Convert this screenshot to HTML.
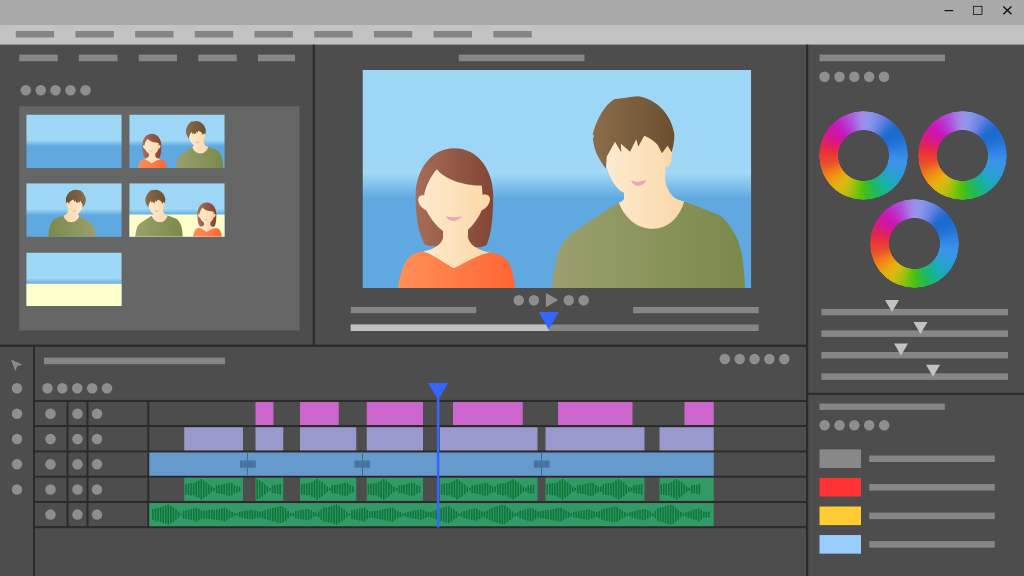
<!DOCTYPE html>
<html><head><meta charset="utf-8"><title>Video editor</title>
<style>
html,body{margin:0;padding:0;background:#4d4d4d;font-family:"Liberation Sans",sans-serif;}
#app{position:relative;width:1024px;height:576px;overflow:hidden;background:#4d4d4d;}
.wheel{position:absolute;width:89px;height:89px;border-radius:50%;background:conic-gradient(from 0deg,#9d8ee8 0deg,#9295ea 5deg,#8a94ea 10deg,#8290e8 15deg,#7a89e6 20deg,#6f84e4 25deg,#5f7fe0 30deg,#4a78db 35deg,#3672d6 40deg,#266dd1 45deg,#1c6ad0 50deg,#1a6bd0 55deg,#1c6dd2 60deg,#2070d5 65deg,#2474d8 70deg,#2879db 75deg,#2d7ee0 80deg,#3384e4 85deg,#388ae7 90deg,#3a8fe8 95deg,#3a92e7 100deg,#3795e5 105deg,#3497e1 110deg,#3099dc 115deg,#2c9cd6 120deg,#27a0ce 125deg,#22a5c4 130deg,#1caab9 135deg,#19afac 140deg,#18b29d 145deg,#18b48b 150deg,#1bb677 155deg,#1fb764 160deg,#27b950 165deg,#31bc3a 170deg,#3dbe25 175deg,#4bc015 180deg,#5ec10c 185deg,#75c10b 190deg,#8dc10e 195deg,#a4c010 200deg,#b8bf10 205deg,#cbbd10 210deg,#dab910 215deg,#e3b210 220deg,#eaaa10 225deg,#eda010 230deg,#f09411 235deg,#f08715 240deg,#ee771b 245deg,#ec6722 250deg,#e95828 255deg,#e84b2e 260deg,#e84131 265deg,#e93935 270deg,#e8313c 275deg,#e62a49 280deg,#e2245b 285deg,#de1e6f 290deg,#da1982 295deg,#d61691 300deg,#d2149f 305deg,#cd14ab 310deg,#c917b6 315deg,#c41ebf 320deg,#be29c7 325deg,#b936ce 330deg,#b344d5 335deg,#ae52da 340deg,#aa63df 345deg,#a775e3 350deg,#a384e6 355deg,#9d8ee8 360deg);
-webkit-mask:radial-gradient(circle closest-side,transparent 0,transparent 25.1px,#000 25.7px,#000 44.2px,transparent 44.6px);
mask:radial-gradient(circle closest-side,transparent 0,transparent 25.1px,#000 25.7px,#000 44.2px,transparent 44.6px);}
</style></head><body><div id="app"><svg width="1024" height="576" viewBox="0 0 1024 576" style="position:absolute;left:0;top:0"><defs>
<linearGradient id="sky" x1="0" y1="0" x2="0" y2="1" gradientUnits="objectBoundingBox">
 <stop offset="0" stop-color="#9ed7f6"/>
 <stop offset="0.445" stop-color="#9ed7f6"/>
 <stop offset="0.47" stop-color="#a2d9f6"/>
 <stop offset="0.59" stop-color="#5fa9e0"/>
 <stop offset="1" stop-color="#5fa9e0"/>
</linearGradient>
<linearGradient id="wskin" x1="418" y1="0" x2="490" y2="0" gradientUnits="userSpaceOnUse">
 <stop offset="0" stop-color="#fdead0"/><stop offset="1" stop-color="#fbd8a6"/>
</linearGradient>
<linearGradient id="whair" x1="415" y1="0" x2="493" y2="0" gradientUnits="userSpaceOnUse">
 <stop offset="0" stop-color="#a56e58"/><stop offset="1" stop-color="#834534"/>
</linearGradient>
<linearGradient id="wshirt" x1="398" y1="0" x2="515" y2="0" gradientUnits="userSpaceOnUse">
 <stop offset="0" stop-color="#ff9058"/><stop offset="1" stop-color="#ff6633"/>
</linearGradient>
<linearGradient id="mskin" x1="605" y1="0" x2="685" y2="0" gradientUnits="userSpaceOnUse">
 <stop offset="0" stop-color="#fdead0"/><stop offset="1" stop-color="#fbd8a6"/>
</linearGradient>
<linearGradient id="mhair" x1="592" y1="0" x2="675" y2="0" gradientUnits="userSpaceOnUse">
 <stop offset="0" stop-color="#8c6c4a"/><stop offset="1" stop-color="#6a5030"/>
</linearGradient>
<linearGradient id="mshirt" x1="552" y1="0" x2="745" y2="0" gradientUnits="userSpaceOnUse">
 <stop offset="0" stop-color="#9ba06e"/><stop offset="1" stop-color="#7a894a"/>
</linearGradient>

<g id="woman">
 <!-- hair back -->
 <path fill="url(#whair)" d="M454.2,148.2 C478,148.2 493.2,170 493.2,196 C493.2,218 491,236 486.5,245 C481,248.5 472,247.5 467.5,245 L442.5,244 C437,247 429,247 424.5,244 C418,232 415.6,216 415.6,196 C415.6,170 431,148.2 454.2,148.2 Z"/>
 <!-- shirt -->
 <path fill="url(#wshirt)" d="M422.5,251.2 C413,253 406,258 403.5,266 C400.5,274 398.5,282 398,288 L515,288 C514.5,280 512.5,270 509,263 C505.5,256.5 498,253.5 490,252.5 L454,256 Z"/>
 <!-- neck / chest skin -->
 <path fill="url(#wskin)" d="M443,225 L443,238 C441,246 431,250 423,251.5 C433,254 446,264.5 453.8,268.2 C462,264.5 477,255 489.5,252.6 C478,250 468.5,245 467.8,236 L467.8,225 Z"/>
 <!-- ears -->
 <path fill="#fde8cc" d="M425,195.6 C421.5,194.2 418,196.2 418.2,200 C418.5,204.6 422,208.8 427,210.4 Z"/>
 <path fill="#fbd9a8" d="M482,195 C485.5,193.6 490.3,195.2 490,199.4 C489.6,204.2 486,208.6 481,210.4 Z"/>
 <!-- face -->
 <path fill="url(#wskin)" d="M436.7,169.2 C431,176 425.5,186 424,196 C423.7,203 425,208 427,211.8 C431,219.5 437,226.5 443,231 L443,235 L468,235 L468,229.8 C474,224.5 479,217 481.6,210.5 C482.8,206 483,200 482.6,196 L481.8,185.6 C468,185.5 448,182 436.7,169.2 Z"/>
 <!-- mouth -->
 <path fill="#eba3b8" d="M445.5,216.3 C450,217.6 457,217.6 461.8,216.3 C459.5,219.6 456.5,220.9 453.6,220.9 C450.6,220.9 447.6,219.6 445.5,216.3 Z"/>
</g>

<g id="man">
 <!-- shirt -->
 <path fill="url(#mshirt)" d="M618.8,202.2 L575,231 C566,237 561,244 558.5,252 C555,264 552.5,278 552,288 L745,288 C744.5,276 743.5,264 742,256 C740,245 737,237 733,231 C729,224 724,218 719,215 L684.2,201.2 Z"/>
 <!-- neck -->
 <path fill="url(#mskin)" d="M624,180 L624,199 C623,201 621,202 618.8,202.4 C624,217 637,228.8 652.7,228.8 C668,228.8 680,217 684.2,201.3 C679,200.5 675.5,198.5 673.4,197 C669,192 666,187 665.3,181 L665,160 Z"/>
 <!-- ear -->
 <path fill="#fbdaac" d="M660,138 L670,144 L672,154 L664,154 Z"/>
 <path fill="#fbd8a6" d="M664,150 C667,146 671.5,148 671.8,153 C672,158 670.5,164 668.3,166.8 C666.5,167 665,166 664.2,165 Z"/>
 <!-- face -->
 <path fill="url(#mskin)" d="M606,131 L606.5,166 C608,174 613,184 619,189.5 C622,192 624.5,193.5 628,194 L660,194 C663,188 665,180 665.2,172 L666,131 Z"/>
 <!-- hair -->
 <path fill="url(#mhair)" d="M638.3,96.3 C630,97 621,98.3 614.2,99.2 C604,105 596,121 592.6,134.6 L594,135.6 L592.9,139 C593.6,146 595.8,152 597.8,156 C600,160.5 603,165 605.8,168.4
  L606.7,156.7 L615,141.7 L621.3,152.5 L620.8,143.8 L630,151.7 L636.3,139.2 L638.3,146.7 L644.2,135.8 C650,138 654,141 657.5,144.7 L662,153.3 L667.5,145.8 L671.7,152.2
  C673.5,146 674.6,140 674.3,134 C672,118 660,100 638.3,96.3 Z"/>
 <!-- mouth -->
 <path fill="#eba3b8" d="M630.8,180.4 C636,182.4 642,182 646.6,179.6 C645,183.6 641.6,185.7 638.2,185.7 C635,185.7 632.3,183.6 630.8,180.4 Z"/>
</g>

<clipPath id="pv"><rect x="362.5" y="70" width="388.75" height="218"/></clipPath>
</defs><rect x="0.00" y="0.00" width="1024.00" height="576.00" fill="#4d4d4d" /><rect x="0.00" y="0.00" width="1024.00" height="25.00" fill="#a9a9a9" /><rect x="0.00" y="25.00" width="1024.00" height="19.60" fill="#c3c3c3" /><path d="M944.5,10.6 H953.2" stroke="#111" stroke-width="1.2" fill="none"/><rect x="973.4" y="6.3" width="8.6" height="8.2" stroke="#111" stroke-width="0.8" fill="none"/><path d="M1003.3,6.4 L1011.5,14.3 M1011.5,6.4 L1003.3,14.3" stroke="#111" stroke-width="1.35" fill="none"/><rect x="15.75" y="31.00" width="38.40" height="6.50" fill="#858585" /><rect x="75.44" y="31.00" width="38.40" height="6.50" fill="#858585" /><rect x="135.13" y="31.00" width="38.40" height="6.50" fill="#858585" /><rect x="194.82" y="31.00" width="38.40" height="6.50" fill="#858585" /><rect x="254.51" y="31.00" width="38.40" height="6.50" fill="#858585" /><rect x="314.20" y="31.00" width="38.40" height="6.50" fill="#858585" /><rect x="373.89" y="31.00" width="38.40" height="6.50" fill="#858585" /><rect x="433.58" y="31.00" width="38.40" height="6.50" fill="#858585" /><rect x="493.27" y="31.00" width="38.40" height="6.50" fill="#858585" /><rect x="19.25" y="54.60" width="38.50" height="6.60" fill="#868686" /><rect x="78.75" y="54.60" width="38.75" height="6.60" fill="#868686" /><rect x="138.75" y="54.60" width="38.25" height="6.60" fill="#868686" /><rect x="198.25" y="54.60" width="38.50" height="6.60" fill="#868686" /><rect x="258.00" y="54.60" width="37.00" height="6.60" fill="#868686" /><circle cx="25.75" cy="90.25" r="5.25" fill="#8e8e8e"/><circle cx="40.75" cy="90.25" r="5.25" fill="#8e8e8e"/><circle cx="55.50" cy="90.25" r="5.25" fill="#8e8e8e"/><circle cx="70.50" cy="90.25" r="5.25" fill="#8e8e8e"/><circle cx="85.50" cy="90.25" r="5.25" fill="#8e8e8e"/><rect x="19.25" y="106.25" width="280.25" height="224.25" fill="#666666" /><rect x="312.70" y="44.60" width="2.20" height="300.90" fill="#2b2b2b" /><rect x="806.00" y="44.60" width="2.20" height="531.40" fill="#2b2b2b" /><rect x="0.00" y="344.60" width="806.00" height="2.30" fill="#2b2b2b" /><rect x="808.00" y="392.80" width="216.00" height="2.10" fill="#2b2b2b" /><rect x="33.00" y="346.00" width="2.00" height="230.00" fill="#2b2b2b" /><rect x="458.75" y="54.60" width="125.75" height="6.60" fill="#868686" /><g clip-path="url(#pv)"><rect x="362.50" y="70.00" width="388.75" height="218.00" fill="url(#sky)" /><use href="#woman"/><use href="#man"/></g><clipPath id="tc1"><rect x="26.25" y="114.5" width="95.5" height="53.5"/></clipPath><g clip-path="url(#tc1)"><g transform="translate(26.25 114.5) scale(0.24566) translate(-362.5 -70)"><rect x="362.50" y="70.00" width="388.75" height="219.00" fill="url(#sky)" /></g></g><clipPath id="tc2"><rect x="129.25" y="114.5" width="95.5" height="53.5"/></clipPath><g clip-path="url(#tc2)"><g transform="translate(129.25 114.5) scale(0.24566) translate(-362.5 -70)"><rect x="362.50" y="70.00" width="388.75" height="219.00" fill="url(#sky)" /><use href="#woman"/><use href="#man"/></g></g><clipPath id="tc3"><rect x="26.25" y="183.25" width="95.5" height="53.5"/></clipPath><g clip-path="url(#tc3)"><g transform="translate(26.25 183.25) scale(0.24566) translate(-362.5 -70)"><rect x="362.50" y="70.00" width="388.75" height="219.00" fill="url(#sky)" /><g transform="translate(1198 0) scale(-1 1)"><use href="#man"/></g></g></g><clipPath id="tc4"><rect x="129.25" y="183.25" width="95.5" height="53.5"/></clipPath><g clip-path="url(#tc4)"><g transform="translate(129.25 183.25) scale(0.24566) translate(-362.5 -70)"><rect x="362.50" y="70.00" width="388.75" height="219.00" fill="url(#sky)" /><rect x="362.50" y="197.00" width="388.75" height="92.00" fill="#ffffcc" /><use href="#man" x="-165"/><use href="#woman" x="224"/></g></g><clipPath id="tc5"><rect x="26.25" y="252.5" width="95.5" height="53.5"/></clipPath><g clip-path="url(#tc5)"><g transform="translate(26.25 252.5) scale(0.24566) translate(-362.5 -70)"><rect x="362.50" y="70.00" width="388.75" height="219.00" fill="url(#sky)" /><rect x="362.50" y="197.00" width="388.75" height="92.00" fill="#ffffcc" /></g></g><circle cx="518.75" cy="300.25" r="5.25" fill="#8e8e8e"/><circle cx="533.90" cy="300.25" r="5.25" fill="#8e8e8e"/><circle cx="568.75" cy="300.25" r="5.25" fill="#8e8e8e"/><circle cx="583.70" cy="300.25" r="5.25" fill="#8e8e8e"/><path d="M545.9,293 L558.3,300.1 L545.9,307.2 Z" fill="#8e8e8e"/><rect x="350.75" y="307.00" width="125.50" height="6.20" fill="#868686" /><rect x="633.10" y="307.00" width="125.60" height="6.20" fill="#868686" /><rect x="350.75" y="324.50" width="407.95" height="6.50" fill="#868686" /><rect x="350.75" y="324.50" width="198.00" height="6.50" fill="#c0c0c0" /><path d="M538.75,312 L558.75,312 L548.75,329.6 Z" fill="#3366ff"/><rect x="819.50" y="54.60" width="125.50" height="6.60" fill="#868686" /><circle cx="824.50" cy="76.75" r="5.25" fill="#8e8e8e"/><circle cx="839.50" cy="76.75" r="5.25" fill="#8e8e8e"/><circle cx="854.30" cy="76.75" r="5.25" fill="#8e8e8e"/><circle cx="869.20" cy="76.75" r="5.25" fill="#8e8e8e"/><circle cx="884.00" cy="76.75" r="5.25" fill="#8e8e8e"/><rect x="821.40" y="308.90" width="186.60" height="6.50" fill="#868686" /><rect x="821.40" y="330.40" width="186.60" height="6.50" fill="#868686" /><rect x="821.40" y="352.00" width="186.60" height="6.50" fill="#868686" /><rect x="821.40" y="373.40" width="186.60" height="6.50" fill="#868686" /><path d="M885,300 L899,300 L892,312 Z" fill="#c2c2c2"/><path d="M913.5,322 L927.5,322 L920.5,334 Z" fill="#c2c2c2"/><path d="M894,343.4 L908,343.4 L901,355.4 Z" fill="#c2c2c2"/><path d="M926,364.7 L940,364.7 L933,376.7 Z" fill="#c2c2c2"/><rect x="819.50" y="403.50" width="125.30" height="6.40" fill="#868686" /><circle cx="824.60" cy="425.20" r="5.25" fill="#8e8e8e"/><circle cx="839.50" cy="425.20" r="5.25" fill="#8e8e8e"/><circle cx="854.30" cy="425.20" r="5.25" fill="#8e8e8e"/><circle cx="869.20" cy="425.20" r="5.25" fill="#8e8e8e"/><circle cx="884.20" cy="425.20" r="5.25" fill="#8e8e8e"/><rect x="819.50" y="449.40" width="41.50" height="18.60" fill="#888888" /><rect x="869.20" y="455.50" width="125.60" height="6.50" fill="#868686" /><rect x="819.50" y="477.95" width="41.50" height="18.60" fill="#ff3333" /><rect x="869.20" y="484.05" width="125.60" height="6.50" fill="#868686" /><rect x="819.50" y="506.50" width="41.50" height="18.60" fill="#ffcc33" /><rect x="869.20" y="512.60" width="125.60" height="6.50" fill="#868686" /><rect x="819.50" y="535.05" width="41.50" height="18.60" fill="#99ccff" /><rect x="869.20" y="541.15" width="125.60" height="6.50" fill="#868686" /><path d="M10.8,359.6 L22.6,364.4 L17.2,366.2 L15.4,371.2 Z" fill="#8a8a8a"/><rect x="44.00" y="357.60" width="181.00" height="6.60" fill="#868686" /><circle cx="47.50" cy="388.25" r="5.25" fill="#8e8e8e"/><circle cx="62.30" cy="388.25" r="5.25" fill="#8e8e8e"/><circle cx="77.25" cy="388.25" r="5.25" fill="#8e8e8e"/><circle cx="92.20" cy="388.25" r="5.25" fill="#8e8e8e"/><circle cx="107.00" cy="388.25" r="5.25" fill="#8e8e8e"/><circle cx="724.75" cy="359.00" r="5.25" fill="#8e8e8e"/><circle cx="739.70" cy="359.00" r="5.25" fill="#8e8e8e"/><circle cx="754.50" cy="359.00" r="5.25" fill="#8e8e8e"/><circle cx="769.40" cy="359.00" r="5.25" fill="#8e8e8e"/><circle cx="784.30" cy="359.00" r="5.25" fill="#8e8e8e"/><circle cx="17.00" cy="388.25" r="5.25" fill="#8e8e8e"/><circle cx="17.00" cy="413.75" r="5.25" fill="#8e8e8e"/><circle cx="17.00" cy="439.00" r="5.25" fill="#8e8e8e"/><circle cx="17.00" cy="464.30" r="5.25" fill="#8e8e8e"/><circle cx="17.00" cy="489.50" r="5.25" fill="#8e8e8e"/><circle cx="50.50" cy="413.75" r="5.25" fill="#8e8e8e"/><circle cx="77.50" cy="413.75" r="5.25" fill="#8e8e8e"/><circle cx="97.00" cy="413.75" r="5.25" fill="#8e8e8e"/><circle cx="50.50" cy="439.00" r="5.25" fill="#8e8e8e"/><circle cx="77.50" cy="439.00" r="5.25" fill="#8e8e8e"/><circle cx="97.00" cy="439.00" r="5.25" fill="#8e8e8e"/><circle cx="50.50" cy="464.30" r="5.25" fill="#8e8e8e"/><circle cx="77.50" cy="464.30" r="5.25" fill="#8e8e8e"/><circle cx="97.00" cy="464.30" r="5.25" fill="#8e8e8e"/><circle cx="50.50" cy="489.50" r="5.25" fill="#8e8e8e"/><circle cx="77.50" cy="489.50" r="5.25" fill="#8e8e8e"/><circle cx="97.00" cy="489.50" r="5.25" fill="#8e8e8e"/><circle cx="50.50" cy="514.60" r="5.25" fill="#8e8e8e"/><circle cx="77.50" cy="514.60" r="5.25" fill="#8e8e8e"/><circle cx="97.00" cy="514.60" r="5.25" fill="#8e8e8e"/><rect x="34.00" y="399.90" width="772.00" height="2.00" fill="#2b2b2b" /><rect x="34.00" y="425.00" width="772.00" height="2.00" fill="#2b2b2b" /><rect x="34.00" y="450.40" width="772.00" height="2.00" fill="#2b2b2b" /><rect x="34.00" y="475.70" width="772.00" height="2.00" fill="#2b2b2b" /><rect x="34.00" y="501.00" width="772.00" height="2.00" fill="#2b2b2b" /><rect x="34.00" y="526.20" width="772.00" height="2.00" fill="#2b2b2b" /><rect x="66.50" y="400.00" width="2.00" height="128.00" fill="#2b2b2b" /><rect x="86.50" y="400.00" width="2.00" height="128.00" fill="#2b2b2b" /><rect x="147.30" y="400.00" width="2.00" height="128.00" fill="#2b2b2b" /><rect x="255.50" y="402.00" width="18.00" height="23.00" fill="#cc66cc" /><rect x="300.00" y="402.00" width="38.75" height="23.00" fill="#cc66cc" /><rect x="366.75" y="402.00" width="56.25" height="23.00" fill="#cc66cc" /><rect x="453.00" y="402.00" width="69.75" height="23.00" fill="#cc66cc" /><rect x="558.00" y="402.00" width="74.50" height="23.00" fill="#cc66cc" /><rect x="684.50" y="402.00" width="29.25" height="23.00" fill="#cc66cc" /><rect x="184.25" y="427.30" width="58.75" height="23.10" fill="#9a99ce" /><rect x="255.50" y="427.30" width="27.75" height="23.10" fill="#9a99ce" /><rect x="300.00" y="427.30" width="56.25" height="23.10" fill="#9a99ce" /><rect x="366.75" y="427.30" width="56.25" height="23.10" fill="#9a99ce" /><rect x="440.00" y="427.30" width="97.50" height="23.10" fill="#9a99ce" /><rect x="545.50" y="427.30" width="99.00" height="23.10" fill="#9a99ce" /><rect x="659.50" y="427.30" width="54.25" height="23.10" fill="#9a99ce" /><rect x="149.30" y="452.60" width="564.45" height="23.10" fill="#6699cc" /><rect x="247.00" y="452.60" width="1.00" height="23.10" fill="#3f6f99" /><rect x="362.00" y="452.60" width="1.00" height="23.10" fill="#3f6f99" /><rect x="541.00" y="452.60" width="1.00" height="23.10" fill="#3f6f99" /><rect x="240.00" y="460.50" width="15.75" height="7.20" fill="#47739e" /><rect x="354.50" y="460.50" width="15.50" height="7.20" fill="#47739e" /><rect x="533.75" y="460.50" width="15.75" height="7.20" fill="#47739e" /><rect x="184.25" y="477.80" width="58.75" height="23.00" fill="#339966" /><rect x="255.50" y="477.80" width="27.75" height="23.00" fill="#339966" /><rect x="300.00" y="477.80" width="56.25" height="23.00" fill="#339966" /><rect x="366.75" y="477.80" width="56.25" height="23.00" fill="#339966" /><rect x="440.00" y="477.80" width="97.50" height="23.00" fill="#339966" /><rect x="545.50" y="477.80" width="99.00" height="23.00" fill="#339966" /><rect x="659.50" y="477.80" width="54.25" height="23.00" fill="#339966" /><rect x="149.30" y="503.10" width="564.45" height="23.10" fill="#339966" /><path d="M185.95,484.22V494.38M188.50,483.56V495.05M191.05,483.21V495.39M193.60,483.31V495.29M196.15,481.95V496.65M198.70,480.53V498.07M201.25,479.10V499.50M203.80,480.63V497.97M206.35,482.19V496.41M208.90,484.49V494.11M211.45,486.57V492.03M214.00,487.77V490.83M216.55,485.33V493.27M219.10,485.10V493.50M221.65,484.78V493.82M224.20,484.00V494.60M226.75,483.21V495.39M229.30,482.68V495.92M231.85,483.04V495.56M234.40,485.11V493.49M236.95,486.15V492.45M239.50,486.52V492.08" stroke="#0f753a" stroke-width="1.55" fill="none"/><path d="M257.20,479.27V499.33M259.75,480.45V498.15M262.30,481.98V496.62M264.85,484.22V494.38M267.40,486.35V492.25M269.95,488.19V490.41M272.50,485.35V493.25M275.05,485.12V493.48M277.60,484.87V493.73M280.15,484.09V494.51" stroke="#0f753a" stroke-width="1.55" fill="none"/><path d="M301.70,484.22V494.38M304.25,483.56V495.05M306.80,483.21V495.39M309.35,483.31V495.29M311.90,481.95V496.65M314.45,480.53V498.07M317.00,479.10V499.50M319.55,480.63V497.97M322.10,482.19V496.41M324.65,484.49V494.11M327.20,486.57V492.03M329.75,487.77V490.83M332.30,485.33V493.27M334.85,485.10V493.50M337.40,484.78V493.82M339.95,484.00V494.60M342.50,483.21V495.39M345.05,482.68V495.92M347.60,483.04V495.56M350.15,485.11V493.49M352.70,486.15V492.45" stroke="#0f753a" stroke-width="1.55" fill="none"/><path d="M368.45,484.22V494.38M371.00,483.56V495.05M373.55,483.21V495.39M376.10,483.31V495.29M378.65,481.95V496.65M381.20,480.53V498.07M383.75,479.10V499.50M386.30,480.63V497.97M388.85,482.19V496.41M391.40,484.49V494.11M393.95,486.57V492.03M396.50,487.77V490.83M399.05,485.33V493.27M401.60,485.10V493.50M404.15,484.78V493.82M406.70,484.00V494.60M409.25,483.21V495.39M411.80,482.68V495.92M414.35,483.04V495.56M416.90,485.11V493.49M419.45,486.15V492.45" stroke="#0f753a" stroke-width="1.55" fill="none"/><path d="M441.70,484.22V494.38M444.25,483.56V495.05M446.80,483.21V495.39M449.35,483.31V495.29M451.90,481.95V496.65M454.45,480.53V498.07M457.00,479.10V499.50M459.55,480.63V497.97M462.10,482.19V496.41M464.65,484.49V494.11M467.20,486.57V492.03M469.75,487.77V490.83M472.30,485.33V493.27M474.85,485.10V493.50M477.40,484.78V493.82M479.95,484.00V494.60M482.50,483.21V495.39M485.05,482.68V495.92M487.60,483.04V495.56M490.15,485.11V493.49M492.70,486.15V492.45M495.25,486.52V492.08M497.80,484.19V494.41M500.35,483.53V495.07M502.90,483.22V495.38M505.45,483.26V495.34M508.00,481.90V496.70M510.55,480.47V498.13M513.10,479.16V499.44M515.65,480.69V497.91M518.20,482.28V496.32M520.75,484.58V494.02M523.30,486.64V491.96M525.85,487.42V491.18M528.40,485.32V493.28M530.95,485.09V493.51M533.50,484.75V493.85" stroke="#0f753a" stroke-width="1.55" fill="none"/><path d="M547.20,484.22V494.38M549.75,483.56V495.05M552.30,483.21V495.39M554.85,483.31V495.29M557.40,481.95V496.65M559.95,480.53V498.07M562.50,479.10V499.50M565.05,480.63V497.97M567.60,482.19V496.41M570.15,484.48V494.12M572.70,486.57V492.03M575.25,487.78V490.82M577.80,485.33V493.27M580.35,485.10V493.50M582.90,484.78V493.82M585.45,484.00V494.60M588.00,483.21V495.39M590.55,482.68V495.92M593.10,483.04V495.56M595.65,485.11V493.49M598.20,486.15V492.45M600.75,486.52V492.08M603.30,484.19V494.41M605.85,483.53V495.07M608.40,483.22V495.38M610.95,483.26V495.34M613.50,481.90V496.70M616.05,480.47V498.13M618.60,479.16V499.44M621.15,480.69V497.91M623.70,482.28V496.32M626.25,484.57V494.03M628.80,486.64V491.96M631.35,487.43V491.17M633.90,485.32V493.28M636.45,485.09V493.51M639.00,484.75V493.85M641.55,483.96V494.64" stroke="#0f753a" stroke-width="1.55" fill="none"/><path d="M661.20,484.22V494.38M663.75,483.56V495.05M666.30,483.21V495.39M668.85,483.31V495.29M671.40,481.95V496.65M673.95,480.53V498.07M676.50,479.10V499.50M679.05,480.63V497.97M681.60,482.19V496.41M684.15,484.48V494.12M686.70,486.57V492.03M689.25,487.78V490.82M691.80,485.33V493.27M694.35,485.10V493.50M696.90,484.78V493.82M699.45,484.00V494.60" stroke="#0f753a" stroke-width="1.55" fill="none"/><path d="M153.00,509.20V520.00M155.55,508.54V520.66M158.10,507.89V521.31M160.65,507.17V522.03M163.20,506.28V522.92M165.75,505.39V523.81M168.30,504.50V524.70M170.85,505.88V523.32M173.40,507.55V521.65M175.95,509.39V519.81M178.50,511.52V517.68M181.05,513.53V515.67M183.60,510.70V518.50M186.15,510.26V518.94M188.70,509.82V519.38M191.25,509.22V519.98M193.80,508.43V520.77M196.35,507.65V521.55M198.90,509.00V520.20M201.45,510.48V518.72M204.00,510.60V518.60M206.55,510.35V518.86M209.10,510.09V519.11M211.65,509.83V519.37M214.20,509.67V519.53M216.75,509.53V519.67M219.30,509.31V519.89M221.85,508.54V520.66M224.40,507.78V521.42M226.95,508.87V520.33M229.50,510.53V518.67M232.05,512.05V517.15M234.60,512.90V516.30M237.15,513.58V515.62M239.70,511.63V517.57M242.25,511.10V518.10M244.80,510.76V518.44M247.35,510.42V518.78M249.90,510.08V519.12M252.45,509.93V519.27M255.00,510.64V518.56M257.55,511.35V517.85M260.10,511.71V517.49M262.65,510.90V518.30M265.20,510.09V519.11M267.75,509.28V519.92M270.30,508.63V520.57M272.85,508.01V521.19M275.40,507.38V521.82M277.95,506.75V522.45M280.50,506.12V523.08M283.05,507.03V522.17M285.60,508.30V520.90M288.15,511.04V518.16M290.70,512.89V516.31M293.25,513.08V516.12M295.80,510.97V518.23M298.35,510.44V518.76M300.90,510.05V519.15M303.45,509.66V519.54M306.00,509.27V519.93M308.55,508.88V520.32M311.10,509.90V519.30M313.65,512.10V517.10M316.20,512.84V516.36M318.75,511.59V517.61M321.30,509.53V519.67M323.85,507.58V521.62M326.40,507.17V522.03M328.95,506.77V522.43M331.50,506.10V523.10M334.05,505.25V523.95M336.60,504.40V524.80M339.15,506.19V523.01M341.70,507.98V521.22M344.25,509.77V519.43M346.80,511.69V517.51M349.35,513.66V515.54M351.90,510.24V518.96M354.45,509.70V519.50M357.00,509.17V520.03M359.55,508.64V520.56M362.10,508.10V521.10M364.65,507.73V521.47M367.20,509.99V519.21M369.75,511.32V517.88M372.30,511.11V518.09M374.85,510.90V518.30M377.40,510.53V518.67M379.95,510.03V519.17M382.50,509.53V519.67M385.05,509.03V520.17M387.60,508.54V520.66M390.15,508.04V521.16M392.70,507.79V521.41M395.25,509.38V519.82M397.80,510.98V518.22M400.35,512.08V517.12M402.90,513.14V516.06M405.45,512.78V516.42M408.00,511.71V517.49M410.55,511.22V517.98M413.10,510.72V518.48M415.65,510.23V518.97M418.20,509.74V519.46M420.75,509.25V519.95M423.30,510.16V519.04M425.85,511.22V517.98M428.40,512.28V516.92M430.95,511.63V517.57M433.50,510.75V518.45M436.05,509.87V519.33M438.60,509.02V520.18M441.15,508.24V520.96M443.70,507.46V521.74M446.25,506.69V522.51M448.80,506.20V523.00M451.35,507.90V521.30M453.90,509.60V519.60M456.45,511.30V517.90M459.00,513.13V516.07M461.55,512.44V516.76M464.10,511.13V518.07M466.65,510.50V518.70M469.20,509.87V519.33M471.75,509.25V519.95M474.30,508.62V520.58M476.85,508.68V520.52M479.40,510.13V519.07M481.95,511.58V517.62M484.50,511.85V517.35M487.05,510.57V518.63M489.60,509.30V519.90M492.15,508.02V521.18M494.70,507.11V522.09M497.25,506.36V522.84M499.80,505.62V523.58M502.35,504.88V524.32M504.90,505.13V524.07M507.45,507.18V522.02M510.00,509.24V519.96M512.55,511.30V517.90M515.10,512.91V516.29M517.65,512.59V516.61M520.20,510.61V518.59M522.75,509.93V519.27M525.30,509.25V519.95M527.85,508.57V520.63M530.40,507.89V521.31M532.95,508.45V520.75M535.50,509.94V519.26M538.05,511.39V517.81M540.60,511.04V518.16M543.15,510.68V518.52M545.70,510.32V518.88M548.25,509.95V519.25M550.80,509.46V519.74M553.35,508.97V520.23M555.90,508.48V520.72M558.45,507.99V521.21M561.00,507.85V521.35M563.55,509.13V520.07M566.10,510.40V518.80M568.65,511.68V517.52M571.20,512.95V516.25M573.75,512.00V517.20M576.30,511.47V517.73M578.85,510.99V518.21M581.40,510.51V518.69M583.95,510.03V519.17M586.50,509.56V519.64M589.05,509.47V519.73M591.60,510.55V518.65M594.15,511.62V517.58M596.70,512.08V517.12M599.25,510.90V518.30M601.80,509.72V519.48M604.35,508.64V520.56M606.90,508.19V521.01M609.45,507.75V521.45M612.00,507.30V521.90M614.55,506.85V522.35M617.10,507.31V521.89M619.65,508.95V520.25M622.20,510.60V518.60M624.75,512.24V516.96M627.30,513.40V515.80M629.85,512.59V516.61M632.40,511.57V517.63M634.95,510.96V518.24M637.50,510.35V518.85M640.05,509.74V519.46M642.60,509.13V520.07M645.15,509.07V520.13M647.70,510.35V518.85M650.25,511.62V517.58M652.80,512.90V516.30M655.35,510.87V518.33M657.90,508.56V520.64M660.45,507.59V521.61M663.00,506.88V522.32M665.55,506.16V523.04M668.10,505.44V523.76M670.65,504.72V524.48M673.20,505.54V523.66M675.75,507.62V521.58M678.30,509.70V519.50M680.85,511.78V517.42M683.40,513.34V515.86M685.95,512.53V516.67M688.50,511.44V517.76M691.05,510.65V518.55M693.60,509.87V519.33M696.15,509.08V520.12M698.70,508.29V520.91M701.25,509.71V519.49M703.80,511.43V517.77M706.35,511.81V517.39M708.90,511.70V517.50" stroke="#0f753a" stroke-width="1.55" fill="none"/><rect x="436.90" y="399.00" width="2.50" height="128.60" fill="#3366ff" /><path d="M428,383 L448.2,383 L438.1,400 Z" fill="#3366ff"/></svg><div class="wheel" style="left:819.15px;top:110.85px"></div><div class="wheel" style="left:918.10px;top:110.85px"></div><div class="wheel" style="left:869.50px;top:198.80px"></div></div></body></html>
